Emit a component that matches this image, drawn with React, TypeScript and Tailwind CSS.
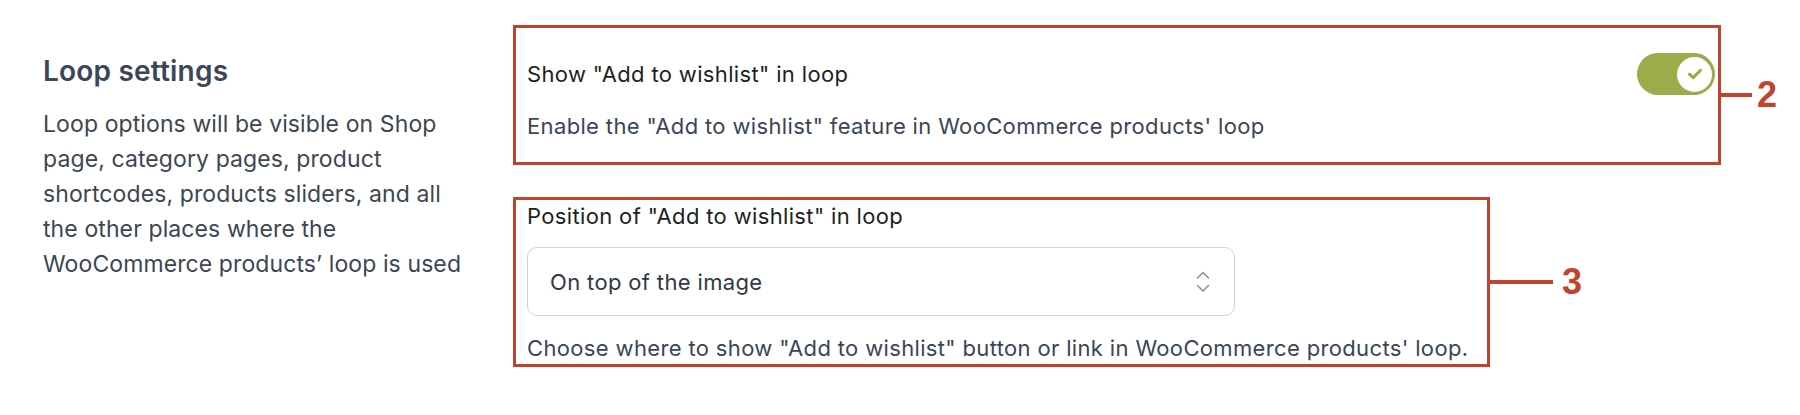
const callout = "border-[3px] border-[#c2432b]";

function Toggle() {
  return (
    <div className="flex h-[42px] w-[78px] shrink-0 items-center justify-end rounded-full bg-[#9dab4b] pr-[1px]">
      <div className="flex h-[39px] w-[39px] items-center justify-center rounded-full border-[2px] border-[#9dab4b] bg-white">
        <svg width="16" height="12" viewBox="0 0 16 12" fill="none">
          <path d="M2.5 6.2 L6.2 9.6 L13.5 2.4" stroke="#9dab4b" strokeWidth="3" strokeLinecap="round" strokeLinejoin="round" />
        </svg>
      </div>
    </div>
  );
}

function Chevrons() {
  return (
    <svg width="14" height="24" viewBox="0 0 14 24" fill="none">
      <path d="M1.5 8 L7 2.5 L12.5 8" stroke="#8a93a3" strokeWidth="1.6" strokeLinecap="round" strokeLinejoin="round" />
      <path d="M1.5 15.5 L7 21 L12.5 15.5" stroke="#8a93a3" strokeWidth="1.6" strokeLinecap="round" strokeLinejoin="round" />
    </svg>
  );
}

function Marker({ n, line }: { n: string; line: string }) {
  return (
    <div className="flex items-center">
      <div className={`h-[4px] bg-[#c2432b] ${line}`} />
      <span className="font-['Liberation_Sans',Arial,sans-serif] text-[36px] font-bold leading-none text-[#c2432b]">
        {n}
      </span>
    </div>
  );
}

export default function App() {
  return (
    <div className="flex h-[415px] w-[1800px] bg-white pl-[43px] font-['Inter','Noto_Sans',sans-serif] text-[22px] tracking-[0.35px]">
      <div className="w-[470px] shrink-0 pt-[54px]">
        <h2 className="text-[28px] font-semibold leading-[34px] tracking-[0.2px] text-[#3b4759]">Loop settings</h2>
        <p className="mt-[19px] w-[428px] text-[23px] leading-[35px] tracking-[0.1px] text-[#3c4653]">
          Loop options will be visible on Shop page, category pages, product shortcodes, products sliders, and all
          the other places where the WooCommerce products’ loop is used
        </p>
      </div>

      <div className="flex flex-col gap-[32px] pt-[25px]">
        <div className="flex items-center">
          <div className={`${callout} h-[140px] w-[1208px] pl-[11px] pr-[3px] pt-[25px]`}>
            <div className="flex items-center justify-between">
              <span className="leading-[30px] text-[#1e1f22]">Show "Add to wishlist" in loop</span>
              <Toggle />
            </div>
            <p className="mt-[16px] leading-[30px] text-[#3a4557]">
              Enable the "Add to wishlist" feature in WooCommerce products' loop
            </p>
          </div>
          <Marker n="2" line="w-[31px] mr-[5px]" />
        </div>

        <div className="flex items-center">
          <div className={`${callout} h-[170px] w-[977px] pl-[11px] pt-[1px]`}>
            <div className="leading-[30px] text-[#1e1f22]">Position of "Add to wishlist" in loop</div>
            <div className="mt-[16px] flex h-[69px] w-[708px] items-center justify-between rounded-[10px] border border-[#cfd4dc] pl-[22px] pr-[24px]">
              <span className="leading-[30px] text-[#2f3846]">On top of the image</span>
              <Chevrons />
            </div>
            <p className="mt-[17px] leading-[30px] text-[#3a4557]">
              Choose where to show "Add to wishlist" button or link in WooCommerce products' loop.
            </p>
          </div>
          <Marker n="3" line="w-[63px] mr-[9px]" />
        </div>
      </div>
    </div>
  );
}
